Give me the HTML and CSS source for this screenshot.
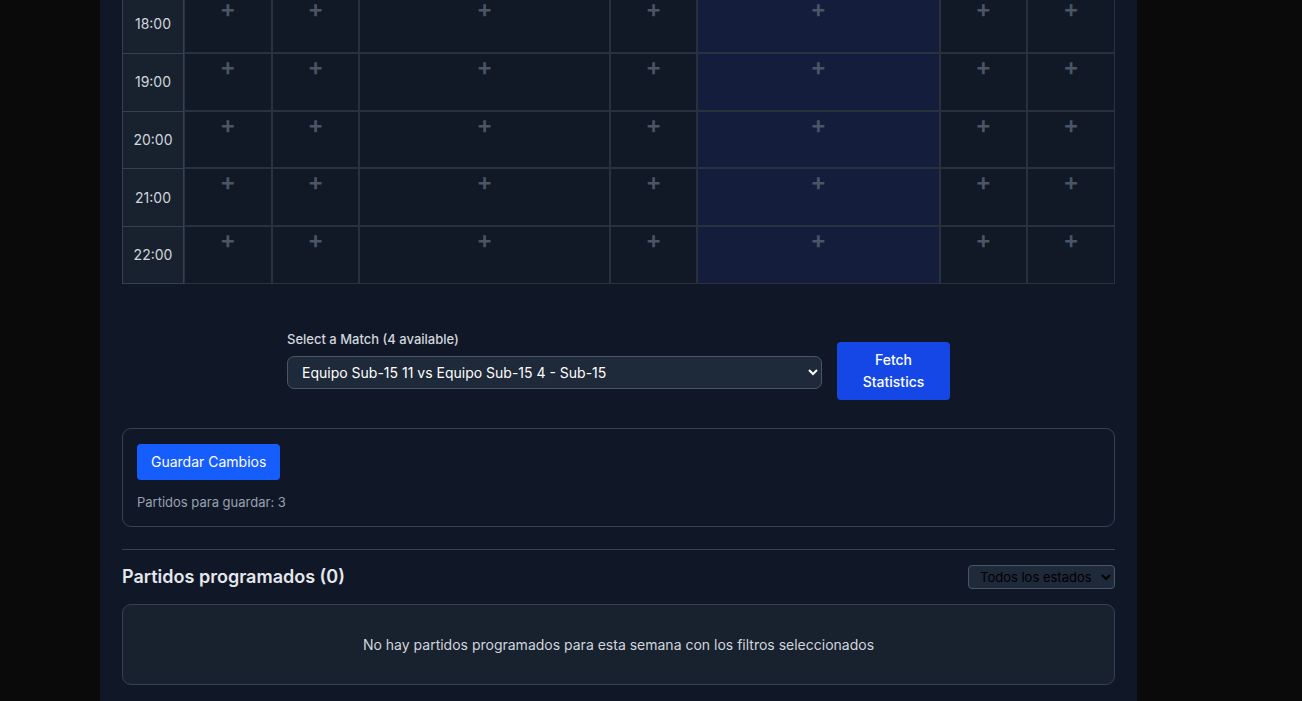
FILE: index.html
```
<!DOCTYPE html>
<html lang="es">
<head>
<meta charset="utf-8">
<title>Partidos programados</title>
<meta name="viewport" content="width=device-width, initial-scale=1">
<link rel="stylesheet" href="styles.css">
</head>
<body>
<main class="panel">
  <table class="schedule">
    <colgroup>
      <col class="col-time"><col class="col-day"><col class="col-day"><col class="col-wide"><col class="col-day"><col class="col-today"><col class="col-day"><col class="col-day">
    </colgroup>
    <tbody id="slots"></tbody>
  </table>

  <form class="match-form">
    <div class="field">
      <label for="match">Select a Match (4 available)</label>
      <select id="match" class="match-select">
        <option>Equipo Sub-15 11 vs Equipo Sub-15 4 - Sub-15</option>
      </select>
    </div>
    <button type="button" class="btn btn-fetch">Fetch Statistics</button>
  </form>

  <section class="save-card">
    <button type="button" class="btn btn-save">Guardar Cambios</button>
    <p class="save-note">Partidos para guardar: 3</p>
  </section>

  <section class="scheduled">
    <header class="scheduled-head">
      <h2>Partidos programados (0)</h2>
      <select class="state-select" aria-label="Estado">
        <option>Todos los estados</option>
      </select>
    </header>
    <p class="empty">No hay partidos programados para esta semana con los filtros seleccionados</p>
  </section>
</main>
<script src="schedule.js"></script>
</body>
</html>
```
FILE: styles.css
```
* {
  box-sizing: border-box;
}

body {
  margin: 0;
  background: #0a0a0a;
  color: #d1d5dc;
  font-family: Inter, "Liberation Sans", sans-serif;
  font-size: 14px;
  line-height: 22px;
  overflow: hidden;
}

h2,
p {
  margin: 0;
}

button,
select {
  font: inherit;
}

.panel {
  min-height: 100vh;
  margin: 0 165px 0 100px;
  padding: 0 22px 16px;
  background: #101828;
}

/* The week grid is scrolled so its first visible row starts above the fold. */
.schedule {
  width: 100%;
  height: 289px;
  margin-top: -5px;
  table-layout: fixed;
  border-collapse: separate;
  border-spacing: 0;
}

.col-time {
  width: 62px;
}

.col-wide {
  width: 25.2%;
}

.col-today {
  width: 24.4%;
}

.schedule th,
.schedule td {
  padding: 0;
}

.schedule th {
  border: 1px solid #364153;
  border-bottom-width: 0;
  background: #18222f;
  font-weight: 400;
}

.schedule tr:last-child th {
  border-bottom-width: 1px;
}

.schedule td {
  border: 1px solid #28323f;
  background: #111826;
  vertical-align: top;
}

.schedule td.today {
  background: #141e3c;
}

.add {
  display: block;
  width: 100%;
  padding: 2px 0;
  border: 0;
  background: none;
  color: #4a5565;
  font-size: 24px;
  font-weight: 600;
  line-height: 22px;
}

.match-form {
  display: flex;
  align-items: flex-end;
  gap: 15px;
  max-width: 663px;
  margin: 44px auto 28px;
}

.field {
  display: flex;
  flex: 1;
  flex-direction: column;
  gap: 6px;
  padding-bottom: 11px;
  font-size: 13px;
  font-weight: 500;
}

.match-select {
  width: 100%;
  height: 33px;
  padding: 0 10px;
  border: 1px solid #4a5565;
  border-radius: 7px;
  background: #1e2939;
  color: #fff;
  font-size: 14px;
  font-weight: 400;
}

.btn {
  border: 0;
  border-radius: 4px;
  background: #155dfc;
  color: #fff;
}

.btn-fetch {
  width: 113px;
  padding: 7px 22px;
  background: #1447e6;
  font-weight: 500;
}

.btn-save {
  padding: 7px 14px;
}

.save-card {
  padding: 15px 14px 13px;
  border: 1px solid #364153;
  border-radius: 9px;
}

.save-note {
  margin-top: 11px;
  color: #99a1af;
  font-size: 13px;
}

.scheduled {
  margin-top: 22px;
  padding-top: 14px;
  border-top: 1px solid #364153;
}

.scheduled-head {
  display: flex;
  align-items: center;
  justify-content: space-between;
  margin-bottom: 14px;
}

.scheduled-head h2 {
  color: #e5e7eb;
  font-size: 18px;
  font-weight: 600;
  line-height: 26px;
}

.state-select {
  height: 24px;
  width: 147px;
  padding: 0 7px;
  border: 1px solid #4a5565;
  border-radius: 4px;
  background: #1e2939;
  color: #000;
  font-size: 13px;
}

.empty {
  padding: 29px 16px 28px;
  border: 1px solid #364153;
  border-radius: 9px;
  background: #18222f;
  text-align: center;
}
```
FILE: schedule.js
```
const body = document.getElementById("slots");
const TODAY = 4;

for (let hour = 18; hour <= 22; hour++) {
  const row = body.insertRow();
  const head = document.createElement("th");
  head.scope = "row";
  head.textContent = hour + ":00";
  row.append(head);
  for (let day = 0; day < 7; day++) {
    const cell = row.insertCell();
    if (day === TODAY) cell.className = "today";
    const add = document.createElement("button");
    add.type = "button";
    add.className = "add";
    add.textContent = "+";
    cell.append(add);
  }
}
```
